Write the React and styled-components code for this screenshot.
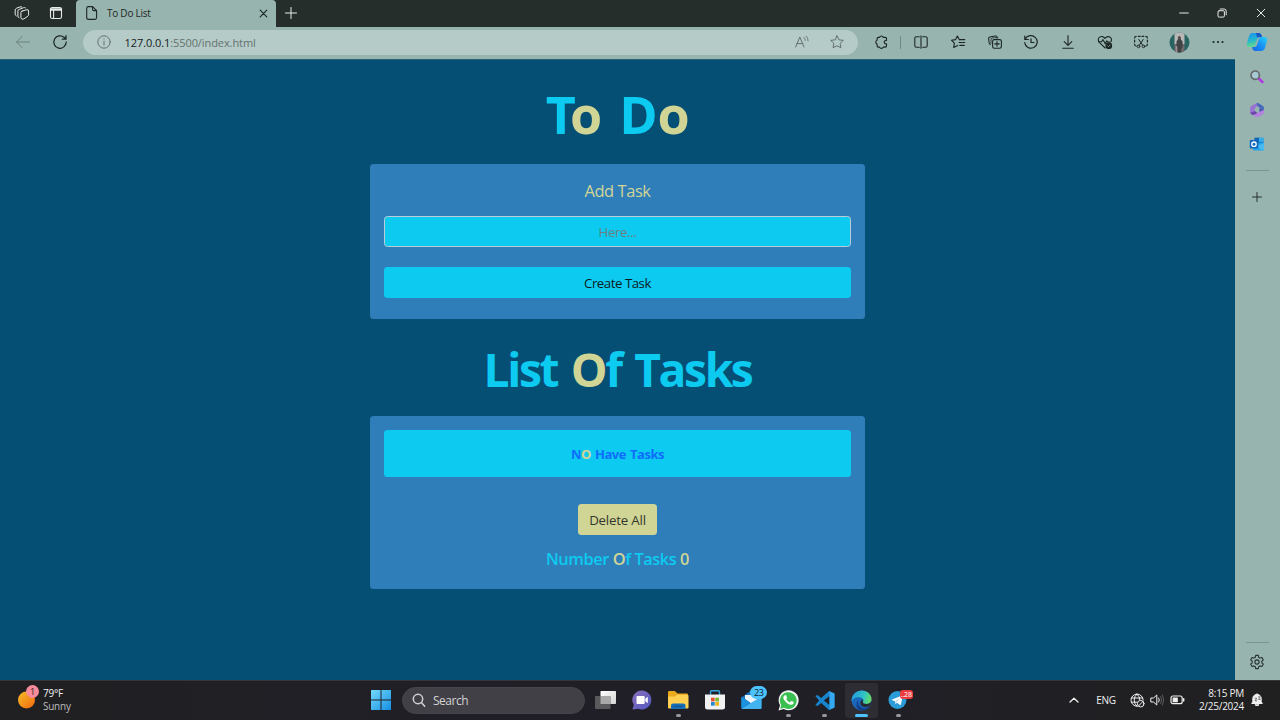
import React from "react";
import styled, { createGlobalStyle } from "styled-components";

const GlobalStyle = createGlobalStyle`
  * { box-sizing: border-box; }
  body { margin: 0; overflow: hidden; font-family: "Open Sans", "Noto Sans", sans-serif; }
  button, input, h1, h2, p { font-family: inherit; margin: 0; }
`;

const Screen = styled.div`
  width: 1280px;
  height: 720px;
  display: flex;
  flex-direction: column;
  background: #064f74;
`;

const TabStrip = styled.header`
  height: 27px;
  flex: none;
  display: flex;
  background: #262e2b;
  color: #e6eae8;
`;

const Slot = styled.div`
  width: ${(p) => p.$w || 36.6}px;
  height: 100%;
  flex: none;
  display: flex;
  align-items: center;
  justify-content: center;
  padding-bottom: ${(p) => p.$lift || 0}px;
  color: ${(p) => p.$color || "inherit"};
  svg { display: block; flex: none; }
`;

const Tab = styled.div`
  width: 200px;
  display: flex;
  align-items: center;
  padding: 0 8px 1px 9px;
  background: #97b4ae;
  border-radius: 4px 4px 0 0;
  color: #1e2725;
  svg { flex: none; }
`;

const TabTitle = styled.span`
  flex: 1;
  margin-left: 8px;
  font-size: 10px;
  letter-spacing: -0.25px;
`;

const Grow = styled.div`
  flex: 1;
`;

const Toolbar = styled.div`
  height: 32px;
  flex: none;
  display: flex;
  align-items: center;
  padding-bottom: 1.5px;
  background: #97b4ae;
  color: #1c2725;
`;

const Address = styled.div`
  width: 775px;
  height: 25px;
  margin: 0 5px 0 4px;
  border-radius: 13px;
  display: flex;
  align-items: center;
  background: #b4cbc7;
  color: #66716f;
`;

const Url = styled.span`
  flex: 1;
  font-size: 11px;
  letter-spacing: -0.08px;
  b { font-weight: 400; color: #17201e; }
`;

const Divider = styled.div`
  width: 1px;
  height: 13px;
  margin: 0 2px 0 2px;
  background: #728a85;
`;

const Body = styled.div`
  flex: 1;
  min-height: 0;
  display: flex;
`;

const Page = styled.main`
  width: 1235px;
  display: flex;
  flex-direction: column;
  align-items: center;
  border-top: 1px solid #2d6478;
`;

const Sidebar = styled.aside`
  width: 45px;
  display: flex;
  flex-direction: column;
  align-items: center;
  padding-right: 1px;
  background: #97b4ae;
  color: #27312f;
`;

const SideItem = styled.div`
  height: ${(p) => p.$h || 33.5}px;
  display: flex;
  align-items: center;
`;

const Rule = styled.div`
  width: 23px;
  height: 1px;
  background: #7b948f;
`;

const Heading = styled.h1`
  height: ${(p) => p.$h}px;
  line-height: ${(p) => p.$lh}px;
  font-size: ${(p) => p.$size}px;
  letter-spacing: ${(p) => p.$track}px;
  word-spacing: ${(p) => p.$gap}px;
  font-weight: 700;
  color: #0dcaf0;
  white-space: pre;
`;

const Tight = styled.span`
  letter-spacing: -6px;
`;

const Accent = styled.span`
  color: #d0d596;
`;

const Card = styled.section`
  width: 494.5px;
  height: ${(p) => p.$h}px;
  flex: none;
  padding: 0 13.5px;
  display: flex;
  flex-direction: column;
  align-items: center;
  border-radius: 3.5px;
  background: #2f7eb9;
`;

const CardLabel = styled.p`
  height: 52px;
  line-height: 53px;
  font-size: 16.4px;
  letter-spacing: -0.4px;
  color: #d0d596;
`;

const TaskInput = styled.input`
  width: 100%;
  height: 31.5px;
  border: 1px solid #b9cdd8;
  border-radius: 3.5px;
  background: #0dcaf0;
  text-align: center;
  font-size: 13.2px;
  letter-spacing: -0.35px;
  padding: 1.5px 0 0;
  outline: none;
  &::placeholder { color: #6c7f83; opacity: 1; }
`;

const Button = styled.button`
  width: ${(p) => (p.$wide ? "100%" : "79px")};
  height: 31.5px;
  flex: none;
  padding: 2px 0 0;
  border: 0;
  border-radius: 3.5px;
  font-size: 13.3px;
  letter-spacing: ${(p) => p.$track}px;
  white-space: nowrap;
  color: ${(p) => (p.$wide ? "#0b1a1f" : "#34372b")};
  background: ${(p) => (p.$wide ? "#0dcaf0" : "#d0d596")};
  margin-top: ${(p) => (p.$wide ? 19.5 : 26.5)}px;
`;

const Notice = styled.div`
  width: 100%;
  height: 47.5px;
  margin-top: 14px;
  line-height: 48px;
  text-align: center;
  border-radius: 3.5px;
  background: #0dcaf0;
  color: #0d6efd;
  font-size: 13px;
  font-weight: 700;
  letter-spacing: -0.45px;
  word-spacing: 1px;
`;

const Counter = styled.p`
  margin-top: 12px;
  line-height: 24px;
  font-size: 16.4px;
  font-weight: 600;
  letter-spacing: -0.45px;
  color: #0dcaf0;
`;

const Taskbar = styled.footer`
  height: 40px;
  flex: none;
  display: flex;
  align-items: center;
  background: linear-gradient(90deg, #202022, #201f27 35%, #201f26 65%, #202021);
  border-top: 1px solid #37343a;
  color: #f0f0f0;
`;

const Weather = styled.div`
  width: 362px;
  height: 100%;
  padding-left: 17px;
  display: flex;
  align-items: center;
`;

const Lines = styled.div`
  font-size: 10px;
  line-height: 13.3px;
  letter-spacing: -0.25px;
  padding-bottom: ${(p) => p.$lift || 0}px;
  text-align: ${(p) => p.$align || "left"};
  white-space: nowrap;
  span { color: #bdbdbd; }
`;

const Search = styled.div`
  width: 183px;
  height: 27px;
  margin: 0 2px 1px 3px;
  padding-left: 9px;
  display: flex;
  align-items: center;
  gap: 7px;
  border-radius: 14px;
  background: #414046;
  border: 1px solid #46454b;
  font-size: 12px;
  letter-spacing: -0.5px;
  color: #d2d2d4;
`;

const TaskApp = styled.div`
  position: relative;
  width: 36.6px;
  height: 39px;
  flex: none;
  display: flex;
  align-items: center;
  justify-content: center;
  padding-bottom: 1px;
  svg { display: block; }
  &::before {
    content: "";
    position: absolute;
    inset: 2px 1.5px;
    border-radius: 3px;
    background: ${(p) => (p.$active ? "#2e2d34" : "transparent")};
    z-index: 0;
  }
  &::after {
    content: "";
    position: absolute;
    bottom: 3.5px;
    left: calc(50% - ${(p) => (p.$active ? 6.5 : 2.5)}px);
    width: ${(p) => (p.$active ? 13 : 5)}px;
    height: 2.5px;
    border-radius: 2px;
    background: ${(p) => (p.$active ? "#4cc2ff" : p.$open ? "#98979c" : "transparent")};
  }
  > svg { position: relative; z-index: 1; }
`;

const Badge = styled.span`
  position: absolute;
  z-index: 2;
  top: ${(p) => p.$top}px;
  left: ${(p) => p.$left}px;
  width: ${(p) => p.$w}px;
  height: ${(p) => p.$h}px;
  line-height: ${(p) => p.$h}px;
  border-radius: ${(p) => p.$r}px;
  text-align: center;
  font-size: ${(p) => p.$size}px;
  letter-spacing: -0.2px;
  background: ${(p) => p.$bg};
  color: ${(p) => p.$fg};
`;

const WeatherIcon = styled.div`
  position: relative;
  width: 26px;
  height: 39px;
  display: flex;
  align-items: center;
  padding-bottom: 2px;
`;

const Tray = styled.div`
  width: ${(p) => p.$w}px;
  display: flex;
  align-items: center;
  justify-content: ${(p) => p.$justify || "center"};
  padding-bottom: 1px;
  font-size: 10px;
  letter-spacing: -0.35px;
`;

function Line({ w = 16, h = 16, sw = 1, children, box }) {
  return (
    <svg width={w} height={h} viewBox={box || `0 0 ${w} ${h}`} fill="none" stroke="currentColor"
      strokeWidth={sw} strokeLinecap="round" strokeLinejoin="round">
      {children}
    </svg>
  );
}

const WorkspacesIcon = () => (
  <Line sw={1}>
    <path d="M8 6.100 12.900 4.700Q14.600 4.400 14.600 6v3.700q0 1-.8 1.500L10 13.800q-1 .6-2 .3-1.100-.4-1.100-1.500V7.600q0-1.100 1.100-1.500Z" />
    <path d="M5 12.700Q3.900 12.300 3.900 11.200V6q0-1.100 1-1.500L9.500 2.700q1-.3 1.900.1" />
    <path d="M2.300 10.900Q1.200 10.400 1.200 9.300V5q0-1.100 1-1.600L6 1.900q.9-.3 1.700 0" />
  </Line>
);
const VerticalTabsIcon = () => (
  <Line sw={1.1}>
    <rect x="2.5" y="2.5" width="11" height="11" rx="1.8" />
    <path d="M2.6 4h10.8M2.6 5h10.8" strokeWidth="1.6" />
    <path d="M5.6 5.5v8" />
  </Line>
);
const PageIcon = () => (
  <Line w={14} sw={1.1}>
    <path d="M3.3 1.6h4.3l4 4v7q0 1.8-1.8 1.8H3.3q-1.6 0-1.6-1.8V3.4q0-1.8 1.6-1.8Z" />
    <path d="M7.6 1.8v2.6q0 1.2 1.2 1.2h2.6" />
  </Line>
);
const CloseIcon = ({ s = 8, sw = 1.2 }) => (
  <Line w={s} h={s} sw={sw}><path d={`M1.200 1.200 ${s - 1.2} ${s - 1.2}M${s - 1.2} 1.200 1.200 ${s - 1.2}`} /></Line>
);
const PlusIcon = ({ s = 12 }) => (
  <Line w={s} h={s}><path d={`M${s / 2} .5v${s - 1}M.5 ${s / 2}h${s - 1}`} /></Line>
);
const BackIcon = () => <Line><path d="M14.5 8h-13M7 2.5 1.5 8 7 13.5" /></Line>;
const ReloadIcon = () => (
  <Line sw={1.25}><path d="M14.2 8A6.2 6.2 0 1 1 12 3.3L14 5.2M14 1.7v3.5h-3.6" /></Line>
);
const InfoIcon = () => (
  <Line><circle cx="8" cy="8" r="6.2" /><path d="M8 7.2v4M8 4.7v.2" /></Line>
);
const ReadAloudIcon = () => (
  <Line>
    <path d="M1.7 13 5.8 3l4.2 10M3 9.6h5.8" />
    <path d="M9.8 3.3q1.5 1 1.4 3.1M12 2q2.3 1.6 2.1 4.8" strokeWidth=".9" />
  </Line>
);
const STAR = "M8 1.8 9.9 5.8l4.4.6-3.2 3 .8 4.4L8 11.7l-3.9 2.1.8-4.4-3.2-3 4.4-.6Z";
const StarIcon = () => <Line><path d={STAR} /></Line>;
const ExtensionsIcon = () => (
  <Line sw={1.15}>
    <path d="M5.4 3.300h1.200a1.900 1.900 0 0 1 3.600 0h2q1.300 0 1.300 1.300v1.900h-.6a1.650 1.650 0 1 0 0 3.300h.6v2q0 1.300-1.300 1.300h-2a1.900 1.900 0 0 1-3.600 0H5.400q-1.300 0-1.300-1.300V10a1.950 1.950 0 0 1 0-3.700V4.600q0-1.300 1.300-1.300Z" />
  </Line>
);
const SplitIcon = () => (
  <Line sw={1.1}>
    <path d="M6.3 2.7H3.4q-1.6 0-1.6 1.6v7.4q0 1.6 1.6 1.6h2.9M9.7 2.7h2.9q1.6 0 1.6 1.6v7.4q0 1.6-1.6 1.6H9.7M8 1.7v12.6" />
  </Line>
);
const FavoritesIcon = () => (
  <Line sw={1.1}>
    <path d="M9.600 5.800 9.200 5.500 7.400 2 5.600 5.600l-4.200.6 3 2.900-.7 4.400L7.600 11.400M10 5.600h4.800M9 8.500h5.800M9.800 11.400h4.400" />
  </Line>
);
const CollectionsIcon = () => (
  <Line sw={1.1}>
    <rect x="5.6" y="5.6" width="8.8" height="8.6" rx="1.7" />
    <path d="M10 7.6v4.6M7.7 9.9h4.6M3.4 10.5q-1-.3-1.2-1.5L1.6 4.7q-.1-1.4 1.2-1.7l5.3-1q1.4-.2 1.9 1l.3.7" />
    <path d="M4 9.2V5.7Q4 3.8 5.9 3.8h5" strokeWidth=".8" />
  </Line>
);
const HistoryIcon = () => (
  <Line sw={1.2}><path d="M1.8 2v3.5h3.5M2.2 5.3A6.3 6.3 0 1 1 1.7 8.7M8 4.8v3.7h3" /></Line>
);
const DownloadIcon = () => <Line sw={1.1}><path d="M8 1.5v9.7M4.2 7.7 8 11.4l3.8-3.7M2.8 14.2h10.4" /></Line>;
const HealthIcon = () => (
  <Line sw={1.1}>
    <path d="M8.2 14 2.2 8.3Q.6 6.2 1.8 4q1.3-1.8 3.5-1.4Q7 3 8 4.4 9 3 10.8 2.6q2.2-.2 3.3 1.6.8 1.6 0 3.2" />
    <path d="M1.8 7.8h2.8L6 5.6l2.2 4.2 1.6-3 1 1.2h2.4" />
    <circle cx="11.8" cy="11.7" r="2.8" fill="currentColor" />
    <path d="m10.7 11.8.8.8 1.6-1.6" stroke="#a9c0bb" strokeWidth=".7" />
  </Line>
);
const CaptureIcon = () => (
  <Line sw={1.2}>
    <path d="M3.2 2.3q-1.6 0-1.6 1.6M5.4 2.3h1.8M9 2.3h1.8M12.8 2.3q1.6 0 1.6 1.6M1.6 6.2V8M14.4 6.2V8M1.6 10.2q0 1.8 1.6 1.8M14.4 10.2q0 1.8-1.6 1.8" />
    <path d="m5.8 5.500 4 5.900M10.200 5.500 6.200 11.400" strokeWidth="1" />
    <circle cx="5.5" cy="12.4" r="1.3" strokeWidth="1" /><circle cx="10.5" cy="12.4" r="1.3" strokeWidth="1" />
  </Line>
);
const Avatar = () => (
  <svg width="21" height="21" viewBox="0 0 21 21">
    <defs><clipPath id="avatarClip"><circle cx="10.5" cy="10.5" r="10" /></clipPath></defs>
    <g clipPath="url(#avatarClip)">
      <rect width="21" height="21" fill="#286562" />
      <rect x="5.5" width="10" height="12" fill="#b9b7b8" />
      <rect x="5.5" y="12" width="10" height="9" fill="#716b6e" />
      <path d="M9 5.5q1.4-2.6 2.6 0l.4 2.2 1.500 1.500.3 5.5-1.3 1.3-.4 5H8.500l.1-6-1.300-1.5.3-4.3 1.3-1.6Z" fill="#3f4447" />
      <circle cx="10.3" cy="5.6" r="1.4" fill="#65514c" />
      <path d="M7.3 14v7" stroke="#b19b9b" />
    </g>
  </svg>
);
const DotsIcon = () => (
  <Line><g fill="currentColor" stroke="none"><circle cx="3.5" cy="8" r="1.1" /><circle cx="8" cy="8" r="1.1" /><circle cx="12.5" cy="8" r="1.1" /></g></Line>
);
const CopilotIcon = () => (
  <svg width="22" height="20" viewBox="0 0 22 20">
    <defs>
      <linearGradient id="cpA" x1="0" y1="0" x2=".2" y2="1"><stop stopColor="#1b91f0" /><stop offset=".55" stopColor="#25b6ce" /><stop offset="1" stopColor="#62d98c" /></linearGradient>
      <linearGradient id="cpB" x1="1" y1="0" x2="0" y2="1"><stop stopColor="#27d1f7" /><stop offset=".55" stopColor="#168cf5" /><stop offset="1" stopColor="#1464e9" /></linearGradient>
    </defs>
    <path d="M6.3 1h6.5q2 0 2.6 2l.7 2.1h-2.6q-1.8 0-2.4 1.9l-1.8 5.7Q8.6 15 6.6 15H3.4Q.1 15 1 11.500L3 4Q4 1 6.300 1Z" fill="url(#cpA)" />
    <path d="M15.7 19H9.200Q7.200 19 6.600 17L6 14.900h2.600q1.800 0 2.400-1.900l1.800-5.700Q13.500 5 15.500 5h3.100q3.300 0 2.400 3.500L19 16q-1 3-3.300 3Z" fill="url(#cpB)" />
    <path d="M12.800 1q2 0 2.600 2l.7 2.100h-2.600q-1.200 0-1.900 1L9.800 1Z" fill="#1556c8" />
  </svg>
);
const MinimizeIcon = () => <Line w={10} h={10}><path d="M.7 5h8.600" /></Line>;
const RestoreIcon = () => (
  <Line w={10} h={10}><rect x="1" y="2.700" width="6.400" height="6.400" rx="1.200" /><path d="M3.200 1h4q2 0 2 2v3.800" /></Line>
);

const SideSearchIcon = () => (
  <svg width="16" height="16" viewBox="0 0 16 16">
    <path d="m9.800 9.600 3.600 3.300" stroke="#b437e5" strokeWidth="2.700" strokeLinecap="round" />
    <circle cx="6.200" cy="6.200" r="4.200" fill="#a7c9d4" stroke="#65696b" strokeWidth="1.700" />
  </svg>
);
const M365Icon = () => (
  <svg width="16" height="16" viewBox="0 0 16 16">
    <path d="M8 .9 5 2.600 2.400 4.100Q1.100 5 1.100 6.500v3.300q0 1.500 1.300 2.300l1 .6q2.500.2 2.200-3.200V7.600q.1-1.600 1.500-2.500L9.600 3.600Q8.300 2.600 8 .9Z" fill="#9a72d2" />
    <path d="M7.600 1q.9-.3 1.900.3l4.100 2.400q1.300.8 1.300 2.300v3.300q-.4-1.500-1.800-2.300L9.400 5Q7.300 3.600 7.600 1Z" fill="#4568bd" />
    <path d="M14.900 8.500v1.600q0 1.500-1.300 2.300L9.600 14.700q-1.600.9-3.200 0l-3.300-2q2.100.2 3.600-.7L10.500 10V6.200l2.600 1.200q1.400.6 1.800 1.100Z" fill="#b77fe0" />
    <path d="m3.100 12.700-1-.8Q1.200 11 1.200 9.900q.9 1 2.400.4L5.600 9l2.900 2-1.800 1.100q-1.600.9-3.600.6Z" fill="#6b43ad" />
    <path d="M10.500 6v4l2.600-1.600q1.200-.8 1.800 0-.4-.8-1.800-1.400Z" fill="#3b57a8" />
  </svg>
);
const OutlookIcon = () => (
  <svg width="16" height="16" viewBox="0 0 16 16">
    <rect x="5.500" y="1.800" width="9" height="10" rx="1" fill="#1580d0" />
    <path d="M5.500 1.800H10v4H5.500Z" fill="#1767b4" /><path d="M10 1.800h4.500v4H10Z" fill="#36aee9" />
    <path d="m4 8 11-1.500v6.800q0 1.200-1.200 1.200H5.200Q4 14.500 4 13.300Z" fill="#27a4e8" />
    <path d="M15 7v6.400q0 .8-.9 1.100L7 10.500Z" fill="#47baf1" />
    <rect x=".8" y="4" width="8.500" height="8.500" rx="1" fill="#0f68bd" />
    <circle cx="5" cy="8.200" r="2.200" fill="none" stroke="#fff" strokeWidth="1.300" />
  </svg>
);
const GearIcon = () => (
  <Line sw={1.100}>
    <circle cx="8" cy="8" r="2.100" />
    <path d="M6.700 1.400h2.600l.4 1.900 1.300.8 1.900-.6 1.400 2.300-1.500 1.400v1.600l1.500 1.400-1.400 2.300-1.900-.6-1.300.8-.4 1.900H6.700l-.4-1.900-1.300-.8-1.900.6-1.400-2.300 1.500-1.400V7.200L1.700 5.800l1.400-2.300 1.900.6 1.300-.8Z" />
  </Line>
);

const SunIcon = () => (
  <svg width="18" height="18" viewBox="0 0 18 18">
    <defs><linearGradient id="sun" x1="0" y1="0" x2="1" y2="1"><stop stopColor="#f8bd27" /><stop offset="1" stopColor="#f0680f" /></linearGradient></defs>
    <circle cx="9.500" cy="9" r="8.500" fill="url(#sun)" />
  </svg>
);
const WindowsIcon = () => (
  <svg width="20" height="20" viewBox="0 0 20 20">
    <defs><linearGradient id="win" x1="0" y1="0" x2="1" y2="1"><stop stopColor="#74dbfc" /><stop offset="1" stopColor="#168ee2" /></linearGradient></defs>
    <path d="M0 .5Q0 0 .5 0h9v9.500H0ZM10.500 0h9q.5 0 .5.500v9h-9.500ZM0 10.500h9.500V20h-9Q0 20 0 19.500ZM10.500 10.500H20v9q0 .5-.5.500h-9Z" fill="url(#win)" />
  </svg>
);
const SearchIcon = () => <Line w={14} h={14} sw={1.500}><circle cx="6" cy="6" r="4.700" /><path d="m9.400 9.600 3.300 3.600" /></Line>;
const TaskViewIcon = () => (
  <svg width="21" height="20" viewBox="0 0 21 20">
    <defs><linearGradient id="tv" x1="0" y1="0" x2="1" y2="1"><stop stopColor="#fff" /><stop offset="1" stopColor="#d4d4d4" /></linearGradient></defs>
    <rect x="5.500" y="1" width="15.500" height="13" rx=".8" fill="url(#tv)" />
    <rect x="0" y="6" width="15.500" height="13" rx=".8" fill="#5a5a5c" />
    <rect x="5.500" y="6" width="10" height="8" fill="#a9a9aa" />
  </svg>
);
const ChatIcon = () => (
  <svg width="20" height="20" viewBox="0 0 20 20">
    <defs><linearGradient id="chat" x1="0" y1="0" x2="1" y2="1"><stop stopColor="#8b70b7" /><stop offset="1" stopColor="#5058c5" /></linearGradient></defs>
    <path d="M10 .5A9.500 9.500 0 1 1 6 18.700L1 19.500q-.7 0-.4-.8L1.800 15A9.500 9.500 0 0 1 10 .5Z" fill="url(#chat)" />
    <rect x="4.500" y="6" width="8.200" height="8" rx="1" fill="#fff" /><path d="m13.300 8.800 2.500-2.100v6.600l-2.500-2Z" fill="#fff" />
  </svg>
);
const FolderIcon = () => (
  <svg width="21" height="20" viewBox="0 0 21 20">
    <path d="M1.200 1h5.600l2.700 2.600h9.300q1.200 0 1.200 1.200V7H0V2.200Q0 1 1.200 1Z" fill="#eba91e" />
    <path d="M0 6.500h7l2-1.700h10.300q1.200 0 1.200 1.200v11.500q0 1-1 1H1q-1 0-1-1Z" fill="#ffd052" />
    <path d="M3 19v-3.500q0-2 2-2h10.500q2 0 2 2V19Z" fill="#136db7" /><path d="M5.500 15.800h9.500v1H5.500Z" fill="#1c517f" />
  </svg>
);
const StoreIcon = () => (
  <svg width="20" height="20" viewBox="0 0 20 20">
    <path d="M5.500 5V2q0-1.300 1.300-1.300h6.400q1.300 0 1.300 1.300v3" fill="none" stroke="#31a9df" strokeWidth="1.400" />
    <path d="M0 4.500h20V17q0 2.500-2.500 2.500h-15Q0 19.500 0 17Z" fill="#f1f1f2" />
    <path fill="#e45131" d="M6 7.700h3.700v3.700H6z" /><path fill="#7db82f" d="M10.300 7.700H14v3.700h-3.700z" /><path fill="#2589d5" d="M6 12h3.700v3.700H6z" /><path fill="#f1b31b" d="M10.300 12H14v3.700h-3.700z" />
  </svg>
);
const MailIcon = () => (
  <svg width="21" height="20" viewBox="0 0 21 20">
    <path d="M.5 7.500 10.500 0l10 7.500V18q0 1-1 1h-18q-1 0-1-1Z" fill="#1673bd" />
    <path d="M4 5h13v6l-6 3-7-5Z" fill="#eaf5fc" />
    <path d="M.5 6.500 15 17.500 1.500 19q-1 0-1-1Z" fill="#1b87d3" />
    <path d="M20.500 6.500V18q0 1-1 1h-18l-.6-.4Z" fill="#42b3ee" />
    <path d="M.5 7.500v10.300L8 13Z" fill="#1b94df" />
  </svg>
);
const WhatsAppIcon = () => (
  <svg width="21" height="21" viewBox="0 0 21 21">
    <path d="M.5 20.500 2 15.300A10 10 0 1 1 5.800 19Z" fill="#f3f6f4" />
    <path d="m2.200 18.800 1-3.700A8.400 8.400 0 1 1 6 17.800Z" fill="#3bbf51" />
    <path d="M6.500 5.400q1-1 1.700.1l.8 2q.2.500-.9 1.600 1.300 2.400 3.600 3.300l1.200-1.400q.3-.4 2.400.8.700.4.300 1.400-.8 1.700-3 1.600-3.700-.7-6.400-4.700-2-2.800.3-4.700Z" fill="#fff" />
  </svg>
);
const CodeIcon = () => (
  <svg width="21" height="21" viewBox="0 0 21 21">
    <path d="M15 1 7.200 8 3.500 5.100 1.300 6l3.900 4.500L1.300 15l2.200.9L7.200 13l7.800 7 5.500-2.500v-14ZM15.500 6v9l-5.700-4.500Z" fill="#1685ce" fillRule="evenodd" />
    <path d="M15 1 20.500 3.500v14L15 20l.5-1V2Z" fill="#35a8f0" />
  </svg>
);
const EdgeIcon = () => (
  <svg width="21" height="21" viewBox="0 0 21 21">
    <defs>
      <linearGradient id="edA" x1="0" y1=".4" x2="1" y2=".6"><stop stopColor="#239bdd" /><stop offset=".6" stopColor="#31c4c4" /><stop offset="1" stopColor="#6bdc5a" /></linearGradient>
      <linearGradient id="edB" x1="0" y1="0" x2=".4" y2="1"><stop stopColor="#1a72c6" /><stop offset="1" stopColor="#1b5fb3" /></linearGradient>
    </defs>
    <circle cx="10.500" cy="10.500" r="10" fill="url(#edB)" />
    <path d="M.5 10A10 10 0 0 1 10.500.5c6 0 10 4.200 10 8.400 0 3.300-2.500 5.100-5 5.100-2.700 0-4-1-3.500-2 1.400-2-.7-4.700-4-4.700C4 7.300 1 9.300.5 12Z" fill="url(#edA)" />
    <path d="M7.500 10q-2 5 3.500 8 4 1.500 8-2-3 5-8.500 4.500Q6 20 5.600 15 5.600 11.600 7.500 10Z" fill="#123f87" />
    <path d="M12 11.800q-.6 2.200 3.500 2.200 3 0 4.600-2.300L19 15.500q-2.800 2-6 1.400Q9 15.800 9.200 12.500L11.500 9Z" fill="#2a2a32" />
  </svg>
);
const TelegramIcon = () => (
  <svg width="20" height="20" viewBox="0 0 20 20">
    <circle cx="9.500" cy="10" r="9" fill="#2a9cd8" />
    <path d="M3.500 9.800 14.200 5.600q.7 0 .5.800l-1.800 8q-.3.900-1.100.4L9 12.700l-1.500 1.400-.4-2.700Z" fill="#fff" /><path d="m7.100 11.400 5.300-3.600-3.800 4.500-1.100 1.800Z" fill="#b8d6e7" />
  </svg>
);
const ChevronUpIcon = () => <Line w={12} h={12} sw={1.300}><path d="m2 8 4-3.800L10 8" /></Line>;
const NoNetworkIcon = () => (
  <Line w={15} h={15}>
    <path d="M7 13.300A6.100 6.100 0 1 1 13.200 7M7 1q-3 2.700-2.800 6.100Q4.300 11 7 13.300M7 1q2.800 2.400 2.800 6M1.300 5h11.300M1.300 9.200H7" />
    <circle cx="10.700" cy="10.700" r="3.300" /><path d="m8.500 13 4.500-4.600" />
  </Line>
);
const VolumeIcon = () => (
  <Line w={15} h={14}>
    <path d="M1.200 5h2.300l3.300-3v10L3.500 9H1.200Z" /><path d="M8.700 5q1.400 2 0 4" /><path d="M10.700 3.500q2 3.500 0 7M12.500 2q2.600 5 0 10" stroke="#5d5d5e" />
  </Line>
);
const BatteryIcon = () => (
  <Line w={15} h={12} sw={1.200}>
    <rect x="1" y="2" width="11.200" height="7.700" rx="2" /><path d="M3.200 4h4v3.700h-4Z" fill="currentColor" /><path d="M13.700 4.700v2.300" strokeWidth="1.400" />
  </Line>
);
const BellIcon = () => (
  <Line w={14} h={14}>
    <path d="M7 1.200A4.200 4.200 0 0 0 2.800 5.400v3.200L1.700 10.500h10.600l-1.100-1.900V5.400A4.200 4.200 0 0 0 7 1.200ZM5.200 12q1.800 1.800 3.600 0Z" fill="currentColor" />
    <path d="M5 5.200h1.800L5 7.800h1.800M8.500 3.800h1.800L8.500 6.400h1.800" stroke="#4a4a4c" strokeWidth=".7" />
  </Line>
);

export default function App() {
  return (
    <Screen>
      <GlobalStyle />
      <TabStrip>
        <Slot $w={3.5} />
        <Slot $w={36} $lift={1}><WorkspacesIcon /></Slot>
        <Slot $w={33.5} $lift={1}><VerticalTabsIcon /></Slot>
        <Slot $w={3} />
        <Tab><PageIcon /><TabTitle>To Do List</TabTitle><Slot $w={10}><CloseIcon s={9} /></Slot></Tab>
        <Slot $w={29} $lift={1}><PlusIcon s={12} /></Slot>
        <Grow />
        <Slot $w={38} $lift={1}><MinimizeIcon /></Slot>
        <Slot $w={38} $lift={1}><RestoreIcon /></Slot>
        <Slot $w={39} $lift={1}><CloseIcon s={10} sw={1} /></Slot>
      </TabStrip>
      <Toolbar>
        <Slot $w={5} />
        <Slot $w={36} $color="#6d827d"><BackIcon /></Slot>
        <Slot $w={38}><ReloadIcon /></Slot>
        <Address>
          <Slot $w={41.5}><InfoIcon /></Slot>
          <Url><b>127.0.0.1</b>:5500/index.html</Url>
          <Slot $w={29}><ReadAloudIcon /></Slot>
          <Slot $w={42}><StarIcon /></Slot>
        </Address>
        <Slot $w={35}><ExtensionsIcon /></Slot>
        <Divider />
        <Slot><SplitIcon /></Slot>
        <Slot $w={37}><FavoritesIcon /></Slot>
        <Slot><CollectionsIcon /></Slot>
        <Slot><HistoryIcon /></Slot>
        <Slot><DownloadIcon /></Slot>
        <Slot><HealthIcon /></Slot>
        <Slot><CaptureIcon /></Slot>
        <Slot $w={40}><Avatar /></Slot>
        <Slot $w={37}><DotsIcon /></Slot>
        <Slot $w={41}><CopilotIcon /></Slot>
      </Toolbar>
      <Body>
        <Page>
          <Heading $h={103.5} $lh={108} $size={52} $track={-0.4} $gap={4.5}>
            <Tight>T</Tight><Accent>o</Accent> D<Accent>o</Accent>
          </Heading>
          <Card $h={155.5}>
            <CardLabel>Add Task</CardLabel>
            <TaskInput placeholder="Here..." />
            <Button $wide $track={-0.5}>Create Task</Button>
          </Card>
          <Heading $h={96.5} $lh={102} $size={46.2} $track={-2.4} $gap={4}>
            List <Accent>O</Accent>f Tasks
          </Heading>
          <Card $h={173.5}>
            <Notice>N<Accent>O</Accent> Have Tasks</Notice>
            <Button $track={-0.2}>Delete All</Button>
            <Counter>Number <Accent>O</Accent>f Tasks <Accent>0</Accent></Counter>
          </Card>
        </Page>
        <Sidebar>
          <SideItem $h={35}><SideSearchIcon /></SideItem>
          <SideItem $h={32.5}><M365Icon /></SideItem>
          <SideItem $h={34}><OutlookIcon /></SideItem>
          <SideItem $h={20}><Rule /></SideItem>
          <SideItem $h={33}><PlusIcon s={10} /></SideItem>
          <Grow />
          <Rule />
          <SideItem $h={37}><GearIcon /></SideItem>
        </Sidebar>
      </Body>
      <Taskbar>
        <Weather>
          <WeatherIcon>
            <SunIcon />
            <Badge $top={4} $left={9} $w={13} $h={13} $r={7} $size={9} $bg="#f68c9b" $fg="#2d1c20">1</Badge>
          </WeatherIcon>
          <Lines $lift={1}>79°F<br /><span>Sunny</span></Lines>
        </Weather>
        <Slot $w={37} $lift={1}><WindowsIcon /></Slot>
        <Search><SearchIcon />Search</Search>
        <TaskApp><TaskViewIcon /></TaskApp>
        <TaskApp><ChatIcon /></TaskApp>
        <TaskApp $open><FolderIcon /></TaskApp>
        <TaskApp><StoreIcon /></TaskApp>
        <TaskApp><MailIcon /><Badge $top={5} $left={17} $w={17} $h={13} $r={7} $size={9} $bg="#4cc2ff" $fg="#10222c">23</Badge></TaskApp>
        <TaskApp $open><WhatsAppIcon /></TaskApp>
        <TaskApp $open><CodeIcon /></TaskApp>
        <TaskApp $active><EdgeIcon /></TaskApp>
        <TaskApp $open><TelegramIcon /><Badge $top={9} $left={20} $w={13} $h={9} $r={3} $size={7} $bg="#ec3b3f" $fg="#fff">..28</Badge></TaskApp>
        <Grow />
        <Tray $w={24}><ChevronUpIcon /></Tray>
        <Tray $w={40}>ENG</Tray>
        <Tray $w={22}><NoNetworkIcon /></Tray>
        <Tray $w={18}><VolumeIcon /></Tray>
        <Tray $w={22}><BatteryIcon /></Tray>
        <Tray $w={56} $justify="flex-end"><Lines $align="right">8:15 PM<br />2/25/2024</Lines></Tray>
        <Tray $w={26}><BellIcon /></Tray>
        <Slot $w={10} />
      </Taskbar>
    </Screen>
  );
}
